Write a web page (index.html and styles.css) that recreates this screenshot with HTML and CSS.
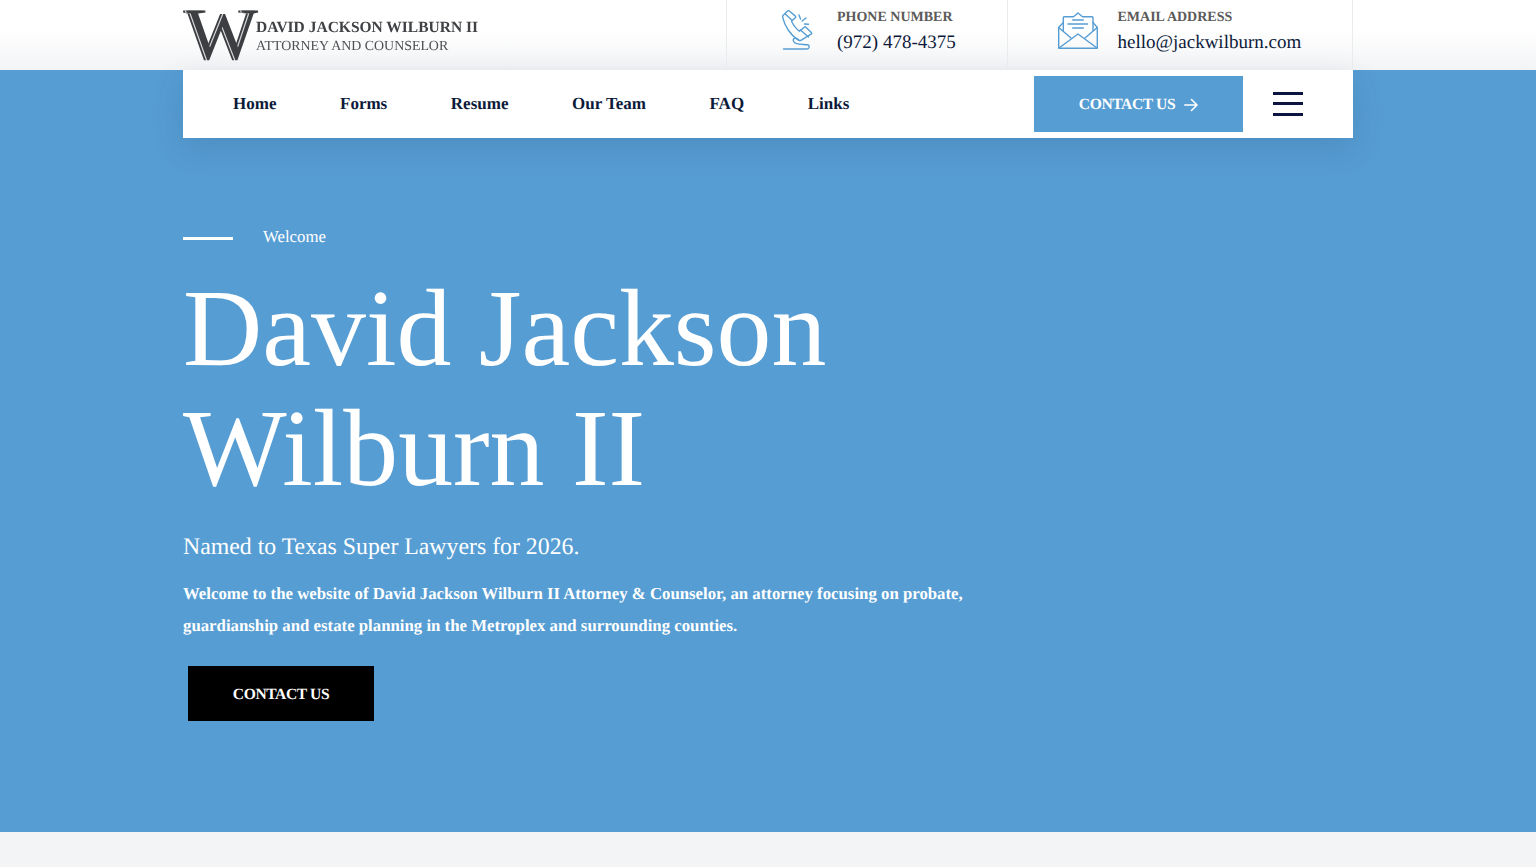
FILE: index.html
```html
<!DOCTYPE html>
<html lang="en">
<head>
<meta charset="utf-8">
<title>David Jackson Wilburn II</title>
<link rel="stylesheet" href="styles.css">
</head>
<body>
<header class="topbar">
  <div class="container topbar-inner">
    <a class="logo" href="#">
      <span class="logo-mark">W</span>
      <span class="logo-text">
        <span class="logo-name">DAVID JACKSON WILBURN II</span>
        <span class="logo-sub">ATTORNEY AND COUNSELOR</span>
      </span>
    </a>
    <div class="contacts">
      <div class="contact contact-phone">
        <svg class="contact-icon" width="32" height="42" viewBox="0 0 32 42" fill="none" stroke="#569dd3" stroke-width="1.4" stroke-linecap="round" stroke-linejoin="round">
          <path d="M5.600 1 1.200 5.300c-.6.600-.7 1.300-.5 2.100C2.500 16 9 25.500 16 30c1.200.8 2.300.8 3.300.2l9.800-6c.7-.5.800-1.200.2-1.800l-5.400-5.200c-.5-.5-1.100-.5-1.700 0l-4.700 4c-3.300-2.400-6-6-8-10l3.800-3.400c.6-.5.600-1.100.1-1.700L7.300 1c-.5-.5-1.200-.5-1.700 0z"/>
          <path d="m3.300 4 6.200 5.800M18.500 20l8 7"/>
          <path d="M17.500 30.500c-1.500-1.500-4.500-3.200-5.800-1.700-1 1.200-.5 3.700 3 4.900 3 1 8.500.6 11 1.100 1.600.4 1.800 2.300 1 3.300-.5.700-1.300.9-2.500.9H1.500"/>
          <path d="m17 5 1.500 4M24 8l-3.800 3M26.500 14.300l-4-.3"/>
        </svg>
        <div class="contact-text">
          <span class="contact-label">PHONE NUMBER</span>
          <span class="contact-value">(972) 478-4375</span>
        </div>
      </div>
      <div class="contact contact-email">
        <svg class="contact-icon" width="40" height="37" viewBox="0 0 40 37" fill="none" stroke="#569dd3" stroke-width="1.4" stroke-linecap="round" stroke-linejoin="round">
          <path d="M.7 15.500v20c0 .5.300.8.800.8h37c.5 0 .8-.3.800-.8v-20"/>
          <path d="M.7 15.500 13 26M39.300 15.500 27 26"/>
          <path d="M1 36 20 22l19 14"/>
          <path d="M.7 15.500 5.300 10.500M39.300 15.500 35 10.500"/>
          <path d="M5.300 18.500V5.500c0-.5.400-.8.800-.8H15.500L20 1l4.500 3.700h9.700c.4 0 .8.300.8.800v13"/>
          <path d="M14.700 8h10.600M10 12h19.500M14.700 16h10.600"/>
        </svg>
        <div class="contact-text">
          <span class="contact-label">EMAIL ADDRESS</span>
          <span class="contact-value">hello@jackwilburn.com</span>
        </div>
      </div>
    </div>
  </div>
</header>

<main class="hero">
  <nav class="container navbar">
    <ul class="nav-links">
      <li><a href="#">Home</a></li>
      <li><a href="#">Forms</a></li>
      <li><a href="#">Resume</a></li>
      <li><a href="#">Our Team</a></li>
      <li><a href="#">FAQ</a></li>
      <li><a href="#">Links</a></li>
    </ul>
    <a class="nav-cta" href="#">CONTACT US
      <svg width="14" height="14" viewBox="0 0 14 14" fill="none" stroke="#fff" stroke-width="1.600" stroke-linecap="round" stroke-linejoin="round"><path d="M.8 7h12M7.500 1.500 13 7l-5.500 5.500"/></svg>
    </a>
    <button class="burger" type="button" aria-label="Menu"><span></span><span></span><span></span></button>
  </nav>

  <section class="container hero-body">
    <div class="eyebrow"><span class="eyebrow-line"></span><span>Welcome</span></div>
    <h1>David Jackson<br>Wilburn II</h1>
    <p class="tagline">Named to Texas Super Lawyers for 2026.</p>
    <p class="intro">Welcome to the website of David Jackson Wilburn II Attorney &amp; Counselor, an attorney focusing on probate, guardianship and estate planning in the Metroplex and surrounding counties.</p>
    <a class="hero-cta" href="#">CONTACT US</a>
  </section>
</main>
<div class="bottom-strip"></div>
</body>
</html>
```
FILE: styles.css
```css
* { box-sizing: border-box; }
html, body { margin: 0; padding: 0; }
body {
  height: 867px;
  overflow: hidden;
  font-family: "Liberation Serif", "Times New Roman", serif;
  text-rendering: geometricPrecision;
  background: #f3f4f6;
  color: #0c1a3a;
}
a { text-decoration: none; color: inherit; }
.container { width: 1170px; margin: 0 auto; }

.topbar {
  height: 70px;
  background: linear-gradient(#fff 40%, #f3f4f6 100%);
}
.topbar-inner { display: flex; justify-content: space-between; height: 100%; }
.logo { display: flex; align-items: flex-start; color: #3f4144; filter: blur(.35px); }
.logo-mark {
  position: relative;
  flex: none;
  font-size: 74px;
  line-height: 70px;
  width: 73px;
  color: #3c3e41;
  transform: scaleX(1.03);
  transform-origin: left center;
}
.logo-mark::before,
.logo-mark::after {
  content: "W";
  position: absolute;
  top: 0;
}
.logo-mark::before { left: 2px; color: #d9dadb; }
.logo-mark::after { left: 3.200px; color: #3c3e41; }
.logo-text { display: flex; flex-direction: column; padding-top: 19px; }
.logo-name { font-size: 15.500px; line-height: 18px; font-weight: 700; white-space: nowrap; }
.logo-sub { font-size: 13.900px; line-height: 19px; color: #4d4f52; white-space: nowrap; }

.contacts { display: flex; height: 100%; }
.contact {
  display: flex;
  align-items: flex-start;
  border-left: 1px solid #e9ebee;
}
.contact-phone { width: 281px; padding-left: 55px; }
.contact-email { width: 346px; padding-left: 50px; border-right: 1px solid #e9ebee; }
.contact-phone .contact-icon { margin-top: 10px; margin-right: 23px; }
.contact-email .contact-icon { margin-top: 12px; margin-right: 19.500px; }
.contact-text { display: flex; flex-direction: column; padding-top: 8px; }
.contact-label { font-size: 14px; line-height: 20px; font-weight: 700; color: #5a5a5a; white-space: nowrap; }
.contact-value { font-size: 19px; line-height: 30px; color: #0c1a3a; white-space: nowrap; }

.hero { height: 762px; background: #569dd3; }
.navbar {
  height: 67.500px;
  background: #fff;
  display: flex;
  align-items: center;
  padding: 0 50px;
  box-shadow: 0 10px 30px rgba(40, 70, 110, .18);
}
.nav-links {
  list-style: none;
  display: flex;
  gap: 63.600px;
  margin: 0;
  padding: 1px 0 0;
  flex: 1;
  font-size: 17px;
  line-height: 20px;
  font-weight: 700;
  color: #0c1a3a;
}
.nav-cta {
  width: 209px;
  height: 56px;
  padding-top: 2px;
  background: #569dd3;
  color: #fff;
  font-size: 15.600px;
  line-height: 20px;
  letter-spacing: -.4px;
  font-weight: 700;
  display: flex;
  align-items: center;
  justify-content: center;
  gap: 9px;
  margin-right: 30px;
}
.burger {
  width: 30px;
  height: 24px;
  padding: 0;
  border: 0;
  background: none;
  display: flex;
  flex-direction: column;
  justify-content: space-between;
}
.burger span { display: block; height: 3px; background: #0c1440; }

.hero-body { color: #fff; padding-top: 87px; }
.eyebrow { display: flex; align-items: center; gap: 30px; font-size: 16.800px; line-height: 24px; }
.eyebrow-line { width: 50px; height: 3px; background: #fff; margin-top: 3px; }
h1 {
  margin: 19px 0 0;
  font-size: 109.800px;
  line-height: 120px;
  font-weight: 400;
}
.tagline { margin: 22px 0 0; font-size: 23.800px; line-height: 34px; }
.intro {
  margin: 14px 0 0;
  width: 800px;
  font-size: 16.800px;
  line-height: 32px;
  font-weight: 700;
}
.hero-cta {
  display: flex;
  align-items: center;
  justify-content: center;
  width: 186px;
  height: 55px;
  margin: 24px 0 0 5px;
  padding-top: 3px;
  background: #000;
  color: #fff;
  font-size: 15.600px;
  line-height: 20px;
  letter-spacing: -.4px;
  font-weight: 700;
}
.bottom-strip { height: 35px; background: #f3f4f6; }
```
